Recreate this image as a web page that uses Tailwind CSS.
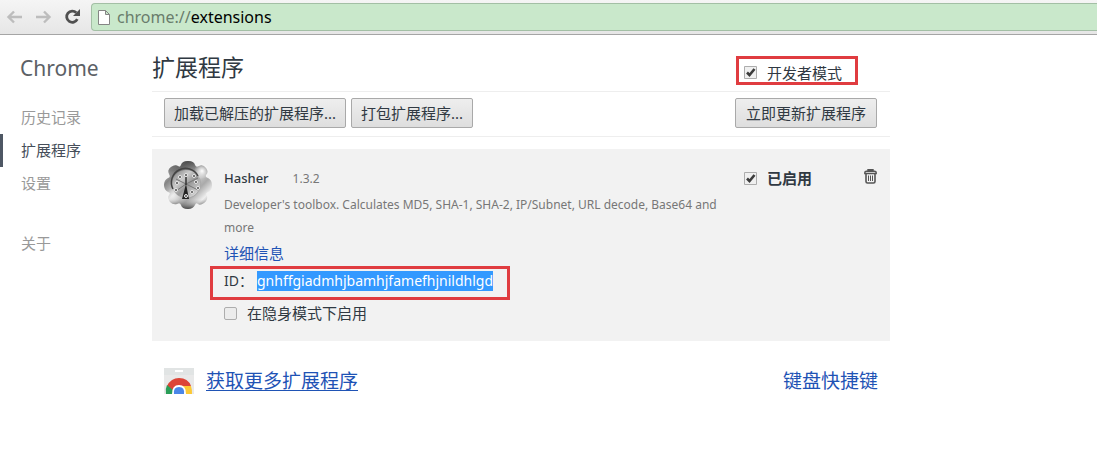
<!DOCTYPE html>
<html lang="zh-CN">
<head>
    <meta charset="UTF-8">
    <meta name="viewport" content="width=device-width, initial-scale=1.0">
    <title>扩展程序</title>
    <script src="https://cdn.jsdelivr.net/npm/@tailwindcss/browser@4"></script>
</head>
<body class="min-h-screen bg-white font-['Noto_Sans','Noto_Sans_CJK_SC',sans-serif] text-[15px] leading-6 text-[#303942]">

    <!-- Browser toolbar -->
    <header class="flex h-[35px] items-center border-b border-[#a5a5a5] bg-linear-to-b from-[#f5f5f5] to-[#e6e6e6] pl-1.5">
        <button type="button" aria-label="后退" class="mr-3 text-[#bdbdbd]">
            <svg class="size-[17px]" viewBox="0 0 17 17" fill="none" stroke="currentColor" stroke-width="2.4"><path d="M16 8H3M8 2.500L2.500 8L8 13.500"/></svg>
        </button>
        <button type="button" aria-label="前进" class="mr-3 text-[#bdbdbd]">
            <svg class="size-[17px]" viewBox="0 0 17 17" fill="none" stroke="currentColor" stroke-width="2.4"><path d="M1 8H14M9 2.500L14.500 8L9 13.500"/></svg>
        </button>
        <button type="button" aria-label="重新加载" class="mr-[10px] text-[#505050]">
            <svg class="size-[17px]" viewBox="0 0 17 17"><path d="M13.300 10.200A5.600 5.600 0 1 1 12.300 3.800" fill="none" stroke="currentColor" stroke-width="2.800"/><path d="M16 0V7H9Z" fill="currentColor"/></svg>
        </button>
        <div class="flex h-7 flex-1 items-center rounded-l-sm border border-r-0 border-[#a3bfa5] bg-[#c9e8cb] pl-1.5">
            <svg class="mr-[7px] h-[15px] w-3" viewBox="0 0 12 15" fill="#fff" stroke="#858585"><path d="M.5.5H7.500L11.500 4.500V14.500H.5ZM7.500.5V4.500H11.500"/></svg>
            <a href="chrome://extensions" class="text-base text-black"><span class="text-[#6a7d6c]">chrome://</span>extensions</a>
        </div>
    </header>

    <div class="flex">
        <!-- Sidebar -->
        <nav class="w-[152px] shrink-0 pt-4 text-[#999999]">
            <h1 class="mb-4 pl-5 text-[21px] leading-[34px] text-[#5c6166]">Chrome</h1>
            <ul>
                <li><a href="#history" class="block border-l-3 border-transparent pl-[18px] leading-[33px]">历史记录</a></li>
                <li><a href="#extensions" class="block border-l-3 border-[#4e5764] pl-[18px] leading-[33px] text-[#464e5a]">扩展程序</a></li>
                <li><a href="#settings" class="block border-l-3 border-transparent pl-[18px] leading-[33px]">设置</a></li>
                <li class="mt-[27px]"><a href="#about" class="block border-l-3 border-transparent pl-[18px] leading-[33px]">关于</a></li>
            </ul>
        </nav>

        <main class="max-w-[738px] flex-1">
            <div class="flex h-[57px] items-end justify-between border-b border-[#eeeeee] pb-1.5">
                <h2 class="pb-0.5 text-[23px] leading-8">扩展程序</h2>
                <label class="mr-8 flex h-[29px] w-[122px] items-center gap-[10px] border-3 border-[#e03c40] pl-[5px] pt-1">
                    <input type="checkbox" checked class="peer sr-only">
                    <svg class="size-[13px]" viewBox="0 0 13 13"><path d="M.5.5H12.500V12.500H.5Z" fill="#f0f0f0" stroke="#adadad"/><path d="M3 6.500L5.500 9L10.500 3" fill="none" stroke="#3c3c3c" stroke-width="2.600"/></svg>
                    开发者模式
                </label>
            </div>

            <div class="flex h-[45px] items-start gap-[5px] border-b border-[#eeeeee] pt-1.5 pr-[13px] pl-3">
                <button type="button" class="h-[30px] rounded-xs border border-[#a9a9a9] bg-linear-to-b from-[#eeeeee] to-[#dedede] px-[9px]">加载已解压的扩展程序...</button>
                <button type="button" class="h-[30px] rounded-xs border border-[#a9a9a9] bg-linear-to-b from-[#eeeeee] to-[#dedede] px-[9px]">打包扩展程序...</button>
                <button type="button" class="ml-auto h-[30px] rounded-xs border border-[#a9a9a9] bg-linear-to-b from-[#eeeeee] to-[#dedede] px-[10px]">立即更新扩展程序</button>
            </div>

            <!-- Extension card -->
            <section class="mt-3 flex bg-[#f2f2f2] pt-3 pr-[13px] pb-4 pl-3">
                <svg class="mr-3 size-12 shrink-0" viewBox="0 0 48 48">
                    <defs>
                        <linearGradient id="metal" x1="0" y1="0" x2="1" y2="1">
                            <stop offset="0" stop-color="#eee"/>
                            <stop offset=".25" stop-color="#858585"/>
                            <stop offset=".45" stop-color="#ddd"/>
                            <stop offset=".65" stop-color="#aaa"/>
                            <stop offset=".8" stop-color="#eee"/>
                            <stop offset="1" stop-color="#666"/>
                        </linearGradient>
                        <linearGradient id="shade" x1="0" y1="0" x2="0" y2="1">
                            <stop offset="0" stop-color="#333" stop-opacity=".7"/>
                            <stop offset=".2" stop-color="#555" stop-opacity=".5"/>
                            <stop offset=".35" stop-color="#888" stop-opacity="0"/>
                            <stop offset=".8" stop-color="#888" stop-opacity="0"/>
                            <stop offset="1" stop-color="#222" stop-opacity=".8"/>
                        </linearGradient>
                        <linearGradient id="dial" x1="0" y1="0" x2="1" y2="1">
                            <stop offset="0" stop-color="#777"/>
                            <stop offset=".35" stop-color="#ccc"/>
                            <stop offset=".55" stop-color="#999"/>
                            <stop offset="1" stop-color="#eee"/>
                        </linearGradient>
                        <radialGradient id="glare">
                            <stop offset="0" stop-color="#fff"/>
                            <stop offset="1" stop-color="#fff" stop-opacity="0"/>
                        </radialGradient>
                        <path id="gear" d="M17 4Q18 0 24 0Q30 0 31 4Q32 7 35 5Q39 3 42 7Q45 11 42 14Q41 16 44 17Q48 19 48 24Q48 30 44 31Q41 32 43 35Q44 39 40 42Q36 45 34 43Q32 41 31 44Q29 48 24 48Q18 48 17 44Q16 41 13 43Q9 44 6 41Q3 37 5 34Q7 32 4 31Q0 29 0 24Q0 19 4 17Q7 16 5 13Q3 9 7 6Q11 3 14 5Q16 7 17 4Z"/>
                    </defs>
                    <use href="#gear" fill="url(#metal)"/>
                    <use href="#gear" fill="url(#shade)"/>
                    <circle cx="38" cy="10" r="8" fill="url(#glare)"/>
                    <circle cx="9" cy="35" r="8" fill="url(#glare)" opacity=".5"/>
                    <circle cx="22" cy="23" r="14" fill="url(#dial)"/>
                    <path d="M9 28A14 14 0 0 1 34 15" fill="none" stroke="#444" stroke-width="1.500"/>
                    <path d="M34 15A14 14 0 0 1 22 37" fill="none" stroke="#aaa"/>
                    <path d="M22 23L18 38H25Z" fill="#222"/>
                    <path d="M22 23L12 18M22 23L34 17M22 23L12 30M22 23L34 29" stroke="#777"/>
                    <path d="M22 16V24" stroke="#333" stroke-width="1.500"/>
                    <g fill="#444" stroke="#eee">
                        <circle cx="16" cy="16" r="1.500"/><circle cx="22" cy="14" r="1.500"/><circle cx="30" cy="15" r="1.500"/>
                        <circle cx="13" cy="22" r="1.500"/><circle cx="32" cy="21" r="1.500"/><circle cx="12" cy="29" r="1.500"/>
                        <circle cx="34" cy="27" r="1.500"/><circle cx="28" cy="31" r="1.500"/><circle cx="22" cy="35" r="1.500"/>
                    </g>
                </svg>
                <div class="flex-1 pt-[5px]">
                    <div class="flex items-baseline gap-6">
                        <h3 class="text-[13px] leading-6 font-medium">Hasher</h3>
                        <span class="text-xs text-[#777777]">1.3.2</span>
                    </div>
                    <p class="mt-[3px] text-xs leading-[23px] text-[#777777]">Developer's toolbox. Calculates MD5, SHA-1, SHA-2, IP/Subnet, URL decode, Base64 and more</p>
                    <a href="#details" class="mt-[2px] block text-[#1f53b5]">详细信息</a>
                    <div class="-ml-[14px] mt-px flex h-[34px] w-[300px] items-start border-3 border-[#e03c40] pt-[2px] pl-[11px] text-sm whitespace-nowrap">
                        <span class="mr-1">ID：</span>
                        <span class="bg-[#3399ff] leading-5 text-white">gnhffgiadmhjbamhjfamefhjnildhlgd</span>
                    </div>
                    <label class="mt-px flex items-center gap-[10px]">
                        <input type="checkbox" class="size-[13px] appearance-none rounded-xs border border-[#adadad] bg-[#ececec]">
                        在隐身模式下启用
                    </label>
                </div>
                <div class="flex h-6 w-[133px] items-center justify-between pt-[10px]">
                    <label class="flex items-center gap-[10px] font-bold">
                        <input type="checkbox" checked class="peer sr-only">
                        <svg class="size-[13px]" viewBox="0 0 13 13"><path d="M.5.5H12.500V12.500H.5Z" fill="#f0f0f0" stroke="#adadad"/><path d="M3 6.500L5.500 9L10.500 3" fill="none" stroke="#3c3c3c" stroke-width="2.600"/></svg>
                        已启用
                    </label>
                    <button type="button" aria-label="删除" class="pb-1">
                        <svg class="h-[15px] w-[13px]" viewBox="0 0 13 15" fill="none" stroke="#555"><path d="M4 2V.8H9V2M.8 4.500V3.500Q.8 2.200 2.500 2.200H10.500Q12.200 2.200 12.200 3.500V4.500Z" stroke-width="1.400"/><path d="M2 5V12.500Q2 14 3.500 14H9.500Q11 14 11 12.500V5" stroke-width="1.600"/><path d="M4.500 6.500V12M6.500 6.500V12M8.500 6.500V12"/></svg>
                    </button>
                </div>
            </section>

            <div class="mt-[26px] flex items-center px-3 text-[19px] leading-7 text-[#1f53b5]">
                <svg class="mr-3 h-[26px] w-[30px]" viewBox="0 0 30 26">
                    <path d="M0 0H30V26H0Z" fill="#e9e9e9"/>
                    <path d="M0 0H30V7H0Z" fill="#e1e4e4"/>
                    <path d="M11 2H19V4H11Z" fill="#fff"/>
                    <path d="M3 18Q7 10 15 10Q24 10 27 18H15L9 23Z" fill="#dc4437"/>
                    <path d="M3 17Q1 21 2 26H10L9 22Z" fill="#2a9e58"/>
                    <path d="M17 18H27Q28 21 28 26H17Z" fill="#fcc934"/>
                    <path d="M8 26Q8 17 15 17Q22 17 22 26Z" fill="#fff"/>
                    <path d="M10 26Q9 19 15 19Q21 19 20 26Z" fill="#4a86e8"/>
                </svg>
                <a href="#store" class="underline decoration-1 underline-offset-2">获取更多扩展程序</a>
                <a href="#shortcuts" class="ml-auto">键盘快捷键</a>
            </div>
        </main>
    </div>

</body>
</html>
